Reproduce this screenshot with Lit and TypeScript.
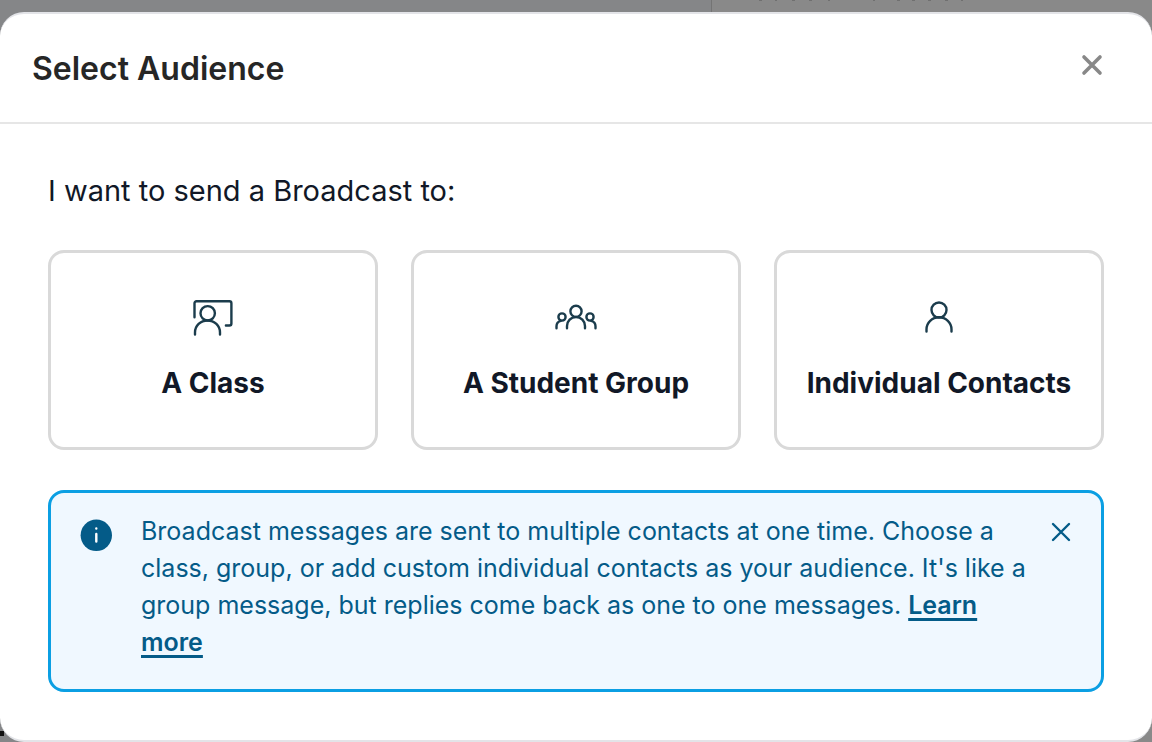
import { LitElement, html, css, svg } from "lit";
import { customElement, state } from "lit/decorators.js";

const classIcon = svg`<svg viewBox="0 0 44 40" width="44" height="40" aria-hidden="true">
  <path d="M3.500 19.300V5.200a2 2 0 0 1 2-2h32.900a2 2 0 0 1 2 2v20.300a2 2 0 0 1-2 2h-3.500"/>
  <circle cx="16.700" cy="15.300" r="7.200"/><path d="M4 36.500v-2c0-6.700 5.500-12 12.500-12s12.500 5.300 12.500 12v2"/></svg>`;
const groupIcon = svg`<svg viewBox="0 0 44 40" width="44" height="40" aria-hidden="true">
  <circle cx="22" cy="13.300" r="5.600"/><path d="M13 30.300v-2.300a9 9 0 0 1 18 0v2.300"/>
  <circle cx="8" cy="19" r="3.600"/><path d="M2.500 30.300v-2c0-2.700 1.800-4.800 4.300-5.400"/>
  <circle cx="36" cy="19" r="3.600"/><path d="M41.500 30.300v-2c0-2.700-1.800-4.800-4.300-5.400"/></svg>`;
const personIcon = svg`<svg viewBox="0 0 44 40" width="44" height="40" aria-hidden="true">
  <circle cx="22" cy="12" r="7.500"/><path d="M9.500 33.500v-2.200c0-6.700 5.600-12 12.500-12s12.500 5.300 12.500 12v2.200"/></svg>`;

@customElement("app-root")
export class AppRoot extends LitElement {
  static styles = css`
    :host {
      display: block;
      position: relative;
      box-sizing: border-box;
      min-height: 100vh;
      padding-top: 12px;
      background:
        linear-gradient(#111, #111) 0 calc(100% - 6px) / 4px 5px no-repeat,
        linear-gradient(90deg, #858688 0 711px, #747474 711px 712px, #898989 712px);
      font-family: Inter, "Liberation Sans", sans-serif;
      color: #111827;
    }
    * { box-sizing: border-box; }
    button { font: inherit; color: inherit; cursor: pointer; }
    svg { display: block; fill: none; stroke: currentColor; stroke-width: 2.4; stroke-linecap: round; stroke-linejoin: round; }
    .behind { position: absolute; top: 0; left: 756px; stroke: #707070; stroke-width: 2; stroke-linecap: butt; }
    .modal { background: #fff; border: 2px solid #e3e4e8; border-width: 2px 0; border-radius: 24px; }
    .header { display: flex; justify-content: space-between; align-items: center; height: 110px; padding: 2px 46px 0 32px; border-bottom: 2px solid #e6e6e6; }
    h1 { margin: 0; font-size: 32px; line-height: 40px; font-weight: 600; color: #262626; }
    .close { padding: 0; border: 0; background: none; }
    .header .close { margin-bottom: 8px; color: #888; }
    .header .close svg { stroke-width: 3.6; }
    .body { padding: 48px; }
    .lead { margin: 0 0 40px; font-size: 29px; line-height: 38px; }
    .cards { display: grid; grid-template-columns: repeat(3, 1fr); gap: 33px; }
    .card { display: flex; flex-direction: column; align-items: center; gap: 25px; height: 200px; padding: 45px 8px 0; border: 3px solid #d9d9d9; border-radius: 16px; background: #fff; font-size: 28px; line-height: 40px; font-weight: 700; white-space: nowrap; }
    .card svg { color: #1b3c4c; }
    .info { display: flex; align-items: flex-start; margin-top: 40px; padding: 20px 26px 26px 29px; border: 3px solid #0b9fe3; border-radius: 16px; background: #f0f8ff; color: #045b88; }
    .badge { flex: none; margin: 6px 29px 0 0; }
    .info p { flex: 1; margin: 0; padding-bottom: 2px; font-size: 25px; line-height: 37px; }
    .info a { color: inherit; font-weight: 600; text-decoration: underline; text-decoration-thickness: 3px; text-underline-offset: 4px; }
    .info .close { margin: 5px 0 0 8px; }
  `;

  @state() private open = true;

  private cross() {
    return svg`<svg viewBox="0 0 28 28" width="28" height="28" aria-hidden="true"><path d="M6 6l16 16M22 6L6 22"/></svg>`;
  }

  render() {
    return html`<svg class="behind" width="212" height="2" aria-hidden="true"><path d="M3 0h3M19 0h2M36 0h3M53 0h3M72 0h2M117 0h2M141 0h3M156 0h3M172 0h3M189 0h3M205 0h2"/></svg>
    <main class="modal" role="dialog" aria-labelledby="title">
      <header class="header"><h1 id="title">Select Audience</h1><button class="close" aria-label="Close">${this.cross()}</button></header>
      <div class="body">
        <p class="lead">I want to send a Broadcast to:</p>
        <div class="cards">
          <button class="card">${classIcon}<span>A Class</span></button>
          <button class="card">${groupIcon}<span>A Student Group</span></button>
          <button class="card">${personIcon}<span>Individual Contacts</span></button>
        </div>
        ${this.open ? html`<section class="info">
          <svg class="badge" viewBox="0 0 32 32" width="32" height="32" aria-hidden="true"><circle cx="16.300" cy="16.300" r="15.700" fill="#045b88" stroke="none"/><path d="M16.300 15v7.500M16.300 9.500v.1" stroke="#fff"/></svg>
          <p>Broadcast messages are sent to multiple contacts at one time. Choose a class, group, or add custom individual contacts as your audience. It's like a group message, but replies come back as one to one messages. <a href="#">Learn more</a></p>
          <button class="close" aria-label="Dismiss" @click=${() => (this.open = false)}>${this.cross()}</button>
        </section>` : null}
      </div>
    </main>`;
  }
}
